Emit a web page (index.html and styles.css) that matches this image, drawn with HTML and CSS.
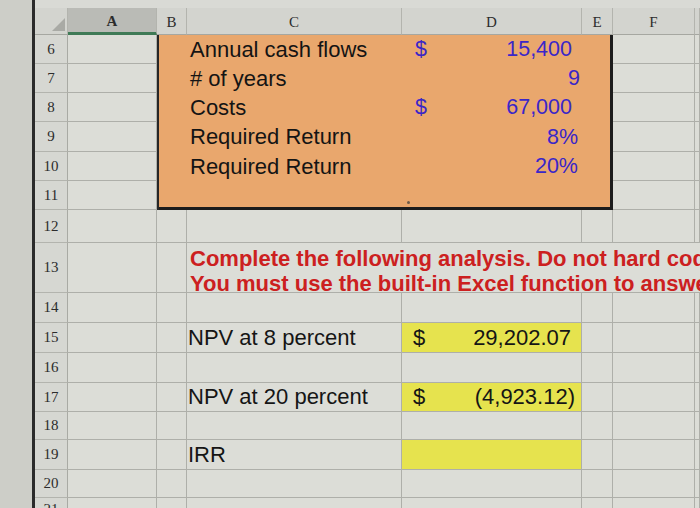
FILE: index.html
```html
<!DOCTYPE html>
<html>
<head>
<meta charset="utf-8">
<link rel="stylesheet" href="styles.css">
</head>
<body>
<div class="screen">
  <div class="strip"></div>
  <div class="sheet">
    <div class="topband"></div>
    <div class="grid">
      <div class="box">
        <div class="bc"></div><div class="bc lbl">Annual cash flows</div><div class="bc num"><span>$</span><span>15,400</span></div><div class="bc"></div>
        <div class="bc"></div><div class="bc lbl"># of years</div><div class="bc num gen"><span></span><span>9</span></div><div class="bc"></div>
        <div class="bc"></div><div class="bc lbl">Costs</div><div class="bc num"><span>$</span><span>67,000</span></div><div class="bc"></div>
        <div class="bc"></div><div class="bc lbl">Required Return</div><div class="bc num pct"><span></span><span>8%</span></div><div class="bc"></div>
        <div class="bc"></div><div class="bc lbl">Required Return</div><div class="bc num pct"><span></span><span>20%</span></div><div class="bc"></div>
        <div class="bc"></div><div class="bc"></div><div class="bc"><span class="speck"></span></div><div class="bc"></div>
      </div>

      <div class="ch corner"><span class="tri"></span></div><div class="ch sel">A</div><div class="ch">B</div><div class="ch">C</div><div class="ch">D</div><div class="ch">E</div><div class="ch">F</div><div class="ch"></div>

      <div class="rh">6</div><div class="c"></div><div class="c"></div><div class="c"></div>
      <div class="rh">7</div><div class="c"></div><div class="c"></div><div class="c"></div>
      <div class="rh">8</div><div class="c"></div><div class="c"></div><div class="c"></div>
      <div class="rh">9</div><div class="c"></div><div class="c"></div><div class="c"></div>
      <div class="rh">10</div><div class="c"></div><div class="c"></div><div class="c"></div>
      <div class="rh">11</div><div class="c"></div><div class="c"></div><div class="c"></div>

      <div class="rh">12</div><div class="c"></div><div class="c"></div><div class="c"></div><div class="c"></div><div class="c"></div><div class="c"></div><div class="c"></div>

      <div class="rh">13</div><div class="c"></div><div class="c"></div>
      <div class="c note"><span class="notetext">Complete the following analysis. Do not hard code<br>You must use the built-in Excel function to answer</span></div>

      <div class="rh">14</div><div class="c"></div><div class="c"></div><div class="c"></div><div class="c"></div><div class="c"></div><div class="c"></div><div class="c"></div>
      <div class="rh">15</div><div class="c"></div><div class="c"></div><div class="c lbl2">NPV at 8 percent</div><div class="c yel num2"><span>$</span><span>29,202.07</span></div><div class="c"></div><div class="c"></div><div class="c"></div>
      <div class="rh">16</div><div class="c"></div><div class="c"></div><div class="c"></div><div class="c"></div><div class="c"></div><div class="c"></div><div class="c"></div>
      <div class="rh">17</div><div class="c"></div><div class="c"></div><div class="c lbl2">NPV at 20 percent</div><div class="c yel num2 neg"><span>$</span><span>(4,923.12)</span></div><div class="c"></div><div class="c"></div><div class="c"></div>
      <div class="rh">18</div><div class="c"></div><div class="c"></div><div class="c"></div><div class="c"></div><div class="c"></div><div class="c"></div><div class="c"></div>
      <div class="rh">19</div><div class="c"></div><div class="c"></div><div class="c lbl2">IRR</div><div class="c yel"></div><div class="c"></div><div class="c"></div><div class="c"></div>
      <div class="rh">20</div><div class="c"></div><div class="c"></div><div class="c"></div><div class="c"></div><div class="c"></div><div class="c"></div><div class="c"></div>
      <div class="rh rlast">21</div><div class="c"></div><div class="c"></div><div class="c"></div><div class="c"></div><div class="c"></div><div class="c"></div><div class="c"></div>
    </div>
  </div>
</div>
</body>
</html>
```

FILE: styles.css
```css
html, body {
  margin: 0;
  padding: 0;
  width: 700px;
  height: 508px;
  overflow: hidden;
  background: #cfd0cb;
}

.screen {
  display: flex;
  width: 700px;
  height: 508px;
  overflow: hidden;
}

.strip {
  flex: 0 0 32px;
  background: #cdcec8;
  border-right: 3px solid #2b2b2b;
}

.sheet {
  flex: 1;
  display: flex;
  flex-direction: column;
  min-width: 0;
  overflow: hidden;
}

.topband {
  height: 8px;
  background: #d9dad5;
  flex: 0 0 8px;
}

.grid {
  display: grid;
  grid-template-columns: 33px 89px 30px 215px 180px 31px 82px 1fr;
  grid-template-rows: 27px 29px 29px 29px 30px 29px 29px 33px 50px 30px 30px 30px 29px 28px 30px 28px 30px;
  background: #dcddd7;
}

.ch {
  background: #d3d4cf;
  border-right: 1px solid #b3b4ae;
  border-bottom: 1px solid #a6a7a1;
  font-family: "Liberation Serif", "DejaVu Serif", serif;
  font-size: 15px;
  color: #2c2c2c;
  display: flex;
  align-items: center;
  justify-content: center;
  padding-top: 2px;
}

.ch.sel {
  background: #babbb6;
  border-bottom: 3px solid #3f7a56;
  font-weight: bold;
}

.corner {
  position: relative;
}

.tri {
  position: absolute;
  right: 2px;
  bottom: 3px;
  width: 0;
  height: 0;
  border-left: 13px solid transparent;
  border-bottom: 13px solid #a9aaa5;
}

.rh {
  background: #d6d7d2;
  border-right: 1px solid #a9aaa4;
  border-bottom: 1px solid #b3b4ae;
  font-family: "Liberation Serif", "DejaVu Serif", serif;
  font-size: 15px;
  color: #2c2c2c;
  display: flex;
  align-items: center;
  justify-content: center;
}

.rh.rlast {
  align-items: flex-start;
  padding-top: 4px;
  line-height: 15px;
}

.c {
  border-right: 1px solid #aeafa9;
  border-bottom: 1px solid #aeafa9;
  font-family: "Liberation Sans", Arial, sans-serif;
  font-size: 22px;
  color: #151515;
  display: flex;
  align-items: center;
  white-space: nowrap;
  min-width: 0;
}

.box {
  grid-column: 3 / 7;
  grid-row: 2 / 8;
  background: #e9a76d;
  display: grid;
  grid-template-columns: 30px 215px 180px 31px;
  grid-template-rows: 29px 29px 29px 30px 29px 32px;
  box-shadow: inset 2px 0 0 #262626, inset -3px 0 0 #1c1c1c, inset 0 -3px 0 #1c1c1c;
  z-index: 1;
}

.bc {
  display: flex;
  align-items: center;
  font-family: "Liberation Sans", Arial, sans-serif;
  font-size: 22px;
  white-space: nowrap;
  position: relative;
}

.lbl {
  color: #141414;
  padding-left: 3px;
}

.num {
  justify-content: space-between;
  color: #3a26c8;
  font-size: 21.5px;
  padding-left: 13px;
  padding-right: 10px;
}

.num.gen {
  padding-right: 2px;
}

.num.pct {
  padding-right: 4px;
}

.speck {
  position: absolute;
  left: 5px;
  top: 20px;
  width: 3px;
  height: 3px;
  border-radius: 50%;
  background: #6b5a4a;
}

.note {
  grid-column: 4 / -1;
  color: #cc2020;
  font-weight: bold;
  font-size: 22px;
  line-height: 25px;
  align-items: flex-end;
  padding-left: 3px;
  border-right: none;
}

.notetext {
  margin-bottom: -4px;
}

.lbl2 {
  padding-left: 1px;
}

.yel {
  background: #e6e34e;
}

.num2 {
  justify-content: space-between;
  padding-left: 11px;
  padding-right: 10px;
}

.num2.neg {
  padding-right: 6px;
}
```
